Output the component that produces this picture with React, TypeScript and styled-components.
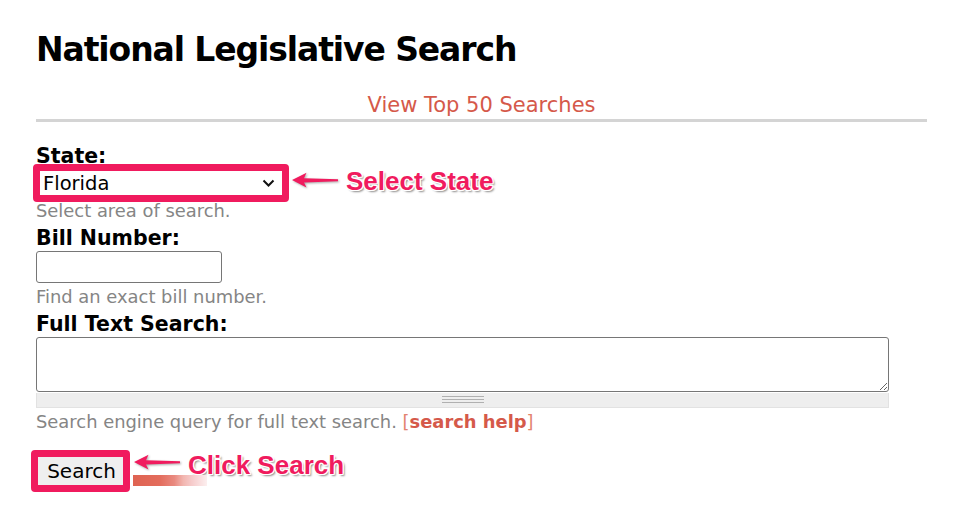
import React from 'react';
import styled, { createGlobalStyle } from 'styled-components';

const PINK = '#f01b5e';

const GlobalStyle = createGlobalStyle`
  body {
    margin: 0;
    background: #fff;
    font-family: "DejaVu Sans", Verdana, sans-serif;
    color: #000;
  }
`;

const Arrow = () => (
  <ArrowSvg width="48" height="18" viewBox="0 0 48 18">
    <path d="M1 8 L15.5 0.8 L13 6.2 L47 7.2 L47 9.2 L13 10.4 L15.5 15.6 Z" fill={PINK} />
  </ArrowSvg>
);

export default function App(): JSX.Element {
  return (
    <Page>
      <GlobalStyle />
      <Title>National Legislative Search</Title>
      <TopLink href="#">View Top 50 Searches</TopLink>
      <Rule />

      <Label $mt={22}>State:</Label>
      <CalloutRow $mt={-4} $ml={-3}>
        <Highlight>
          <StateSelect defaultValue="FL">
            <option value="FL">Florida</option>
          </StateSelect>
          <Chevron width="13" height="9" viewBox="0 0 13 9">
            <path d="M1.5 1.5 L6.5 6.5 L11.5 1.5" fill="none" stroke="#111" strokeWidth="2" />
          </Chevron>
        </Highlight>
        <ArrowWrap $mt={8} $ml={2}>
          <Arrow />
        </ArrowWrap>
        <Callout $mt={4}>Select State</Callout>
      </CalloutRow>
      <Help $mt={-1.5}>Select area of search.</Help>

      <Label $mt={4.5}>Bill Number:</Label>
      <BillInput type="text" />
      <Help $mt={4}>Find an exact bill number.</Help>

      <Label $mt={4.6}>Full Text Search:</Label>
      <TextBox />
      <Grippie>
        <GripLines />
      </Grippie>
      <Help $mt={4}>
        Search engine query for full text search. <Bracket>[</Bracket>
        <HelpLink href="#">search help</HelpLink>
        <Bracket>]</Bracket>
      </Help>

      <ButtonRow>
        <Highlight $ml={-5}>
          <SearchButton type="button">Search</SearchButton>
        </Highlight>
        <CalloutColumn>
          <CalloutRow>
            <ArrowWrap $mt={2.3}>
              <Arrow />
            </ArrowWrap>
            <Callout $ml={7}>Click Search</Callout>
          </CalloutRow>
          <BlurredBar />
        </CalloutColumn>
      </ButtonRow>
    </Page>
  );
}

const Page = styled.div`
  width: 891px;
  padding: 30px 0 0 36px;
`;

const Title = styled.h1`
  margin: 0;
  font-size: 33px;
  letter-spacing: -1.1px;
  line-height: normal;
  font-weight: bold;
  color: #000;
`;

const TopLink = styled.a`
  display: block;
  margin-top: 24px;
  text-align: center;
  font-size: 21px;
  line-height: 25px;
  color: #d5594a;
  text-decoration: none;
`;

const Rule = styled.hr`
  margin: 1px 0 0;
  border: 0;
  height: 3px;
  background: #d4d4d4;
`;

const Label = styled.label<{ $mt: number }>`
  display: block;
  margin-top: ${(p) => p.$mt}px;
  font-size: 20.5px;
  font-weight: bold;
  line-height: normal;
  color: #000;
`;

const Help = styled.div<{ $mt: number }>`
  margin-top: ${(p) => p.$mt}px;
  font-size: 17.9px;
  line-height: 20.6px;
  color: #858585;
`;

const Bracket = styled.span`
  color: #e3836f;
`;

const HelpLink = styled.a`
  color: #d5594a;
  font-weight: bold;
  text-decoration: none;
`;

const CalloutRow = styled.div<{ $mt?: number; $ml?: number }>`
  display: flex;
  align-items: flex-start;
  margin-top: ${(p) => p.$mt || 0}px;
  margin-left: ${(p) => p.$ml || 0}px;
`;

const Highlight = styled.div<{ $ml?: number }>`
  position: relative;
  display: flex;
  margin-left: ${(p) => p.$ml || 0}px;
  border: 7px solid ${PINK};
  border-radius: 4px;
  background: #fff;
`;

const StateSelect = styled.select`
  appearance: none;
  width: 242px;
  height: 24px;
  padding: 0 20px 0 3px;
  border: none;
  outline: none;
  background: #fff;
  font-family: "DejaVu Sans", Verdana, sans-serif;
  font-size: 19.5px;
  color: #000;
`;

const Chevron = styled.svg`
  position: absolute;
  right: 7px;
  top: 8px;
  pointer-events: none;
`;

const ArrowWrap = styled.div<{ $mt: number; $ml?: number }>`
  display: flex;
  margin-top: ${(p) => p.$mt}px;
  margin-left: ${(p) => p.$ml || 0}px;
`;

const ArrowSvg = styled.svg`
  display: block;
  filter: drop-shadow(1px 1.5px 1px rgba(0, 0, 0, 0.35));
`;

const Callout = styled.span<{ $mt?: number; $ml?: number }>`
  margin-top: ${(p) => p.$mt || 0}px;
  margin-left: ${(p) => (p.$ml === undefined ? 7 : p.$ml)}px;
  font-family: "Liberation Sans", Arial, sans-serif;
  font-weight: bold;
  font-size: 26px;
  line-height: 26px;
  color: ${PINK};
  white-space: nowrap;
  text-shadow:
    1px 0 0 #fff, -1px 0 0 #fff, 0 1px 0 #fff, 0 -1px 0 #fff,
    1px 1px 0 #fff, -1px -1px 0 #fff, 1px -1px 0 #fff, -1px 1px 0 #fff,
    2px 2px 2px rgba(0, 0, 0, 0.45);
`;

const BillInput = styled.input`
  display: block;
  box-sizing: border-box;
  width: 186px;
  height: 32px;
  margin: 1.2px 0 0;
  border: 1px solid #767676;
  border-radius: 3px;
  background: #fff;
`;

const TextBox = styled.textarea`
  display: block;
  box-sizing: border-box;
  width: 853px;
  height: 55px;
  margin: 1px 0 0;
  border: 1px solid #767676;
  border-radius: 3px;
  resize: vertical;
  background: #fff;
`;

const Grippie = styled.div`
  box-sizing: border-box;
  display: flex;
  align-items: center;
  justify-content: center;
  width: 853px;
  height: 15px;
  margin-top: 1px;
  background: #eee;
  border: 1px solid #e2e2e2;
  border-top: none;
`;

const GripLines = styled.div`
  width: 42px;
  height: 7px;
  border-top: 1px solid #b0b0b0;
  border-bottom: 1px solid #b0b0b0;
  box-sizing: border-box;
  background: linear-gradient(#b0b0b0, #b0b0b0) center / 100% 1px no-repeat;
`;

const ButtonRow = styled.div`
  display: flex;
  align-items: flex-start;
  margin-top: 17px;
`;

const SearchButton = styled.button`
  width: 85px;
  height: 28px;
  padding: 0 0 0 2px;
  border: none;
  background: #efefef;
  font-family: "DejaVu Sans", Verdana, sans-serif;
  font-size: 20px;
  color: #000;
`;

const CalloutColumn = styled.div`
  display: flex;
  flex-direction: column;
  margin-left: 3px;
  padding-top: 2px;
`;

const BlurredBar = styled.div`
  width: 74px;
  height: 11px;
  margin-top: -3px;
  background: linear-gradient(
    to right,
    #df6352 0%,
    #e36c5c 36%,
    #e98a80 56%,
    #f2b6b0 68%,
    #f6cccc 80%,
    #fcefef 100%
  );
  filter: blur(0.4px);
`;
